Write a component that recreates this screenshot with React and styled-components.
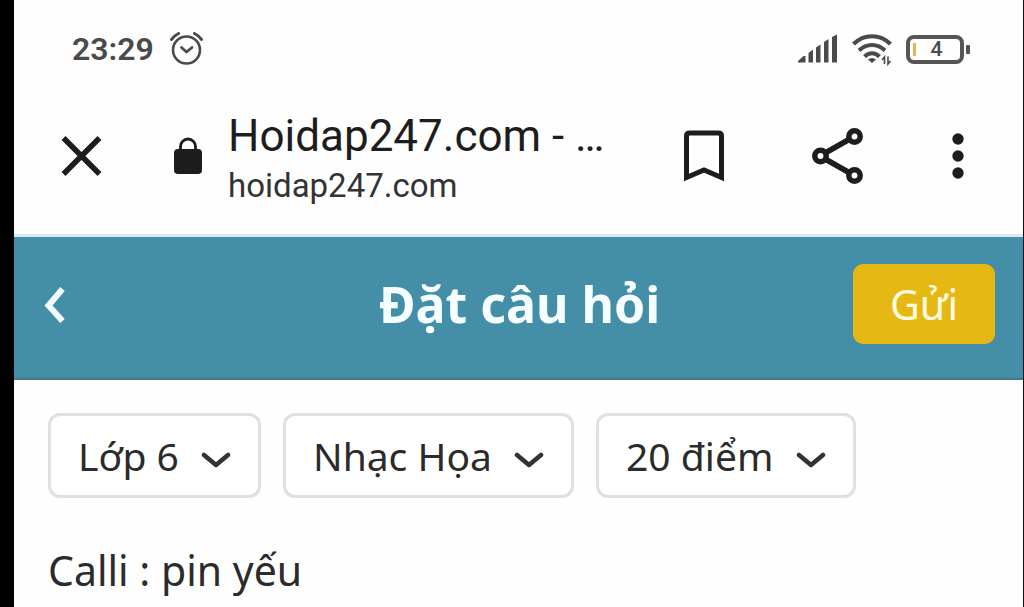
import React from "react";
import styled, { createGlobalStyle } from "styled-components";

const GlobalStyle = createGlobalStyle`
  *, *::before, *::after { box-sizing: border-box; }
  html, body, #root { height: 100%; }
  body { margin: 0; background: #fff; }
  button, select, textarea { font: inherit; color: inherit; margin: 0; }
`;

const Screen = styled.div`
  min-height: 100%;
  display: flex;
  flex-direction: column;
  background: #fefefe;
  border-left: 14px solid #000;
  border-right: 1px solid #111;
  color: #2b2b2b;
  font-family: "Noto Sans", "Open Sans", sans-serif;
  font-size: 41px;
`;

const StatusBar = styled.div`
  display: flex;
  align-items: center;
  justify-content: space-between;
  height: 98px;
  padding: 0 52px 0 58px;
  color: #4a4a4a;
  font-family: Roboto, sans-serif;
`;

const StatusGroup = styled.div`
  display: flex;
  align-items: center;
  gap: ${({ $gap }) => $gap}px;
`;

const Clock = styled.time`
  font-size: 32px;
  font-weight: 600;
  line-height: 40px;
`;

const BrowserBar = styled.div`
  display: flex;
  align-items: center;
  height: 136px;
  padding: 0 59px 20px 46px;
  color: #1d1d1d;
  font-family: Roboto, sans-serif;
`;

const IconButton = styled.button`
  display: flex;
  padding: 0;
  border: 0;
  background: none;
  cursor: pointer;
`;

const Site = styled.div`
  flex: 1;
  min-width: 0;
  display: flex;
  align-items: center;
  gap: 25px;
  margin-left: 71px;
`;

const SiteText = styled.div`
  display: flex;
  flex-direction: column;
  padding-top: 4px;
`;

const SiteTitle = styled.div`
  font-size: 44px;
  line-height: 56px;
  white-space: nowrap;
`;

const SiteUrl = styled.div`
  font-size: 33px;
  line-height: 44px;
  color: #333;
`;

const BrowserActions = styled.div`
  display: flex;
  align-items: center;
  gap: 88px;
`;

const Header = styled.header`
  display: grid;
  grid-template-columns: 1fr auto 1fr;
  align-items: center;
  height: 146px;
  padding: 0 28px 8px 30px;
  background: #458ea8;
  border-top: 3px solid #d9e9f0;
  border-bottom: 2px solid #477789;
  color: #f6ffff;
`;

const Title = styled.h1`
  margin: 0;
  font-size: 50px;
  line-height: 64px;
  font-weight: 700;
`;

const SendButton = styled.button`
  justify-self: end;
  height: 80px;
  padding: 0 37px;
  border: 0;
  border-radius: 10px;
  background: #e6b813;
  color: #fffbe0;
  line-height: 56px;
  cursor: pointer;
`;

const Filters = styled.div`
  display: flex;
  gap: 22px;
  padding: 33px 34px 0;
`;

const Picker = styled.label`
  position: relative;
  display: flex;
`;

const PickerSelect = styled.select`
  appearance: none;
  height: 85px;
  padding: 0 79px 0 27px;
  border: 3px solid #e0e0e0;
  border-radius: 12px;
  background: #fff;
  font-size: 39px;
  cursor: pointer;
`;

const PickerArrow = styled.svg`
  position: absolute;
  right: 30px;
  top: 38px;
  pointer-events: none;
`;

const Question = styled.textarea`
  flex: 1;
  min-height: 100px;
  padding: 44px 34px 0;
  border: 0;
  outline: 0;
  resize: none;
  overflow: hidden;
  background: transparent;
  line-height: 56px;
`;

const AlarmIcon = () => (
  <svg width="34" height="34" viewBox="0 0 34 34" fill="none" stroke="currentColor" strokeWidth="2.6" strokeLinecap="round" aria-hidden="true">
    <circle cx="16.500" cy="18" r="13.500" />
    <path d="M11.500 15.500l5 4.500 5.500-4.500" strokeWidth="2.800" strokeLinejoin="round" />
    <path d="M1.500 7.500C3 5 5.500 3 8.500 1.500M31.500 7.500C30 5 27.500 3 24.500 1.500" strokeWidth="3" />
  </svg>
);

const SignalIcon = () => (
  <svg width="40" height="30" viewBox="0 0 40 30" fill="currentColor" aria-hidden="true">
    <path d="M0 28.500v-1.500l5.500-5h2v6.500zM10.500 19l4.500-3.500v13h-4.500zM18 13.500l4.500-3v18H18zM26 8l4.500-3v23.500H26zM34 3l5-2.500v28h-5z" />
  </svg>
);

const WifiIcon = () => (
  <svg width="40" height="34" viewBox="0 0 40 34" fill="none" stroke="currentColor" strokeWidth="4" aria-hidden="true">
    <path d="M1.500 12C12 1.500 28 1.500 38.500 12" />
    <path d="M7 18.500C14.500 11 25.500 11 33 18.500" />
    <path d="M12.500 24.500C17 20 23 20 27.500 24.500" />
    <path d="M16 27.500q4-3 8 0l-4 3.500z" fill="currentColor" stroke="none" />
    <path d="M32.500 32V25l-2.500 3M36 24.500v7.500l2.500-3" strokeWidth="1.600" />
  </svg>
);

const Battery = styled.div`
  position: relative;
  display: flex;
  align-items: center;
  justify-content: center;
  width: 58px;
  height: 29px;
  margin-right: 7px;
  padding-left: 3px;
  border: 4px solid #555;
  border-radius: 8px;
  font-size: 21px;
  line-height: 24px;
  font-weight: 500;

  &::before {
    content: "";
    position: absolute;
    left: 3px;
    top: 4px;
    width: 3px;
    height: 13px;
    background: #e3b552;
  }

  &::after {
    content: "";
    position: absolute;
    right: -10px;
    top: 6px;
    width: 4px;
    height: 9px;
    border-radius: 1px;
    background: #555;
  }
`;

const CloseIcon = () => (
  <svg width="42" height="42" viewBox="0 0 42 42" fill="none" stroke="currentColor" strokeWidth="5.500" aria-hidden="true">
    <path d="M3.500 3l36 36M39.500 3l-36 36" />
  </svg>
);

const LockIcon = () => (
  <svg width="30" height="38" viewBox="0 0 30 38" aria-hidden="true">
    <rect x="1" y="12" width="28" height="25" rx="4" fill="currentColor" />
    <path d="M7.500 13V9.500a7.500 7.500 0 0 1 15 0V13" fill="none" stroke="currentColor" strokeWidth="2.800" />
  </svg>
);

const BookmarkIcon = () => (
  <svg width="40" height="52" viewBox="0 0 40 52" fill="none" stroke="currentColor" strokeWidth="5" aria-hidden="true">
    <path d="M2.500 47.500V6Q2.500 3 5.500 3h29q3 0 3 3v41.500L20 40z" />
  </svg>
);

const ShareIcon = () => (
  <svg width="52" height="58" viewBox="0 0 52 58" fill="none" stroke="currentColor" strokeWidth="5.500" aria-hidden="true">
    <path d="M14 25.500L37 12.500M14 32.500L37 45.500" />
    <circle cx="8.500" cy="29" r="5.700" />
    <circle cx="42.500" cy="9.500" r="5.700" />
    <circle cx="42.500" cy="48.500" r="5.700" />
  </svg>
);

const MoreIcon = () => (
  <svg width="12" height="46" viewBox="0 0 12 46" fill="currentColor" aria-hidden="true">
    <circle cx="6" cy="6" r="5.700" />
    <circle cx="6" cy="23" r="5.700" />
    <circle cx="6" cy="40" r="5.700" />
  </svg>
);

const BackIcon = () => (
  <svg width="22" height="38" viewBox="0 0 22 38" fill="none" stroke="currentColor" strokeWidth="6" aria-hidden="true">
    <path d="M18.500 4L4.500 20.500l14 15.500" />
  </svg>
);

const filters = [
  { label: "Lớp", value: "Lớp 6" },
  { label: "Môn học", value: "Nhạc Họa" },
  { label: "Điểm", value: "20 điểm" },
];

const Filter = ({ label, value }) => (
  <Picker>
    <PickerSelect aria-label={label} defaultValue={value}>
      <option>{value}</option>
    </PickerSelect>
    <PickerArrow width="30" height="18" viewBox="0 0 30 18" fill="none" stroke="#333" strokeWidth="4.500" strokeLinecap="round" strokeLinejoin="round" aria-hidden="true">
      <path d="M3 4L15 14 27 4" />
    </PickerArrow>
  </Picker>
);

export default function App() {
  return (
    <>
      <GlobalStyle />
      <Screen>
        <StatusBar>
          <StatusGroup $gap={16}>
            <Clock>23:29</Clock>
            <AlarmIcon />
          </StatusGroup>
          <StatusGroup $gap={14}>
            <SignalIcon />
            <WifiIcon />
            <Battery>4</Battery>
          </StatusGroup>
        </StatusBar>
        <BrowserBar>
          <IconButton aria-label="Đóng"><CloseIcon /></IconButton>
          <Site>
            <LockIcon />
            <SiteText>
              <SiteTitle>Hoidap247.com - …</SiteTitle>
              <SiteUrl>hoidap247.com</SiteUrl>
            </SiteText>
          </Site>
          <BrowserActions>
            <IconButton aria-label="Đánh dấu"><BookmarkIcon /></IconButton>
            <IconButton aria-label="Chia sẻ"><ShareIcon /></IconButton>
            <IconButton aria-label="Thêm"><MoreIcon /></IconButton>
          </BrowserActions>
        </BrowserBar>
        <Header>
          <IconButton aria-label="Quay lại"><BackIcon /></IconButton>
          <Title>Đặt câu hỏi</Title>
          <SendButton type="button">Gửi</SendButton>
        </Header>
        <Filters>
          {filters.map((f) => <Filter key={f.label} {...f} />)}
        </Filters>
        <Question rows={1} aria-label="Câu hỏi" defaultValue="Calli : pin yếu" spellCheck={false} />
      </Screen>
    </>
  );
}
